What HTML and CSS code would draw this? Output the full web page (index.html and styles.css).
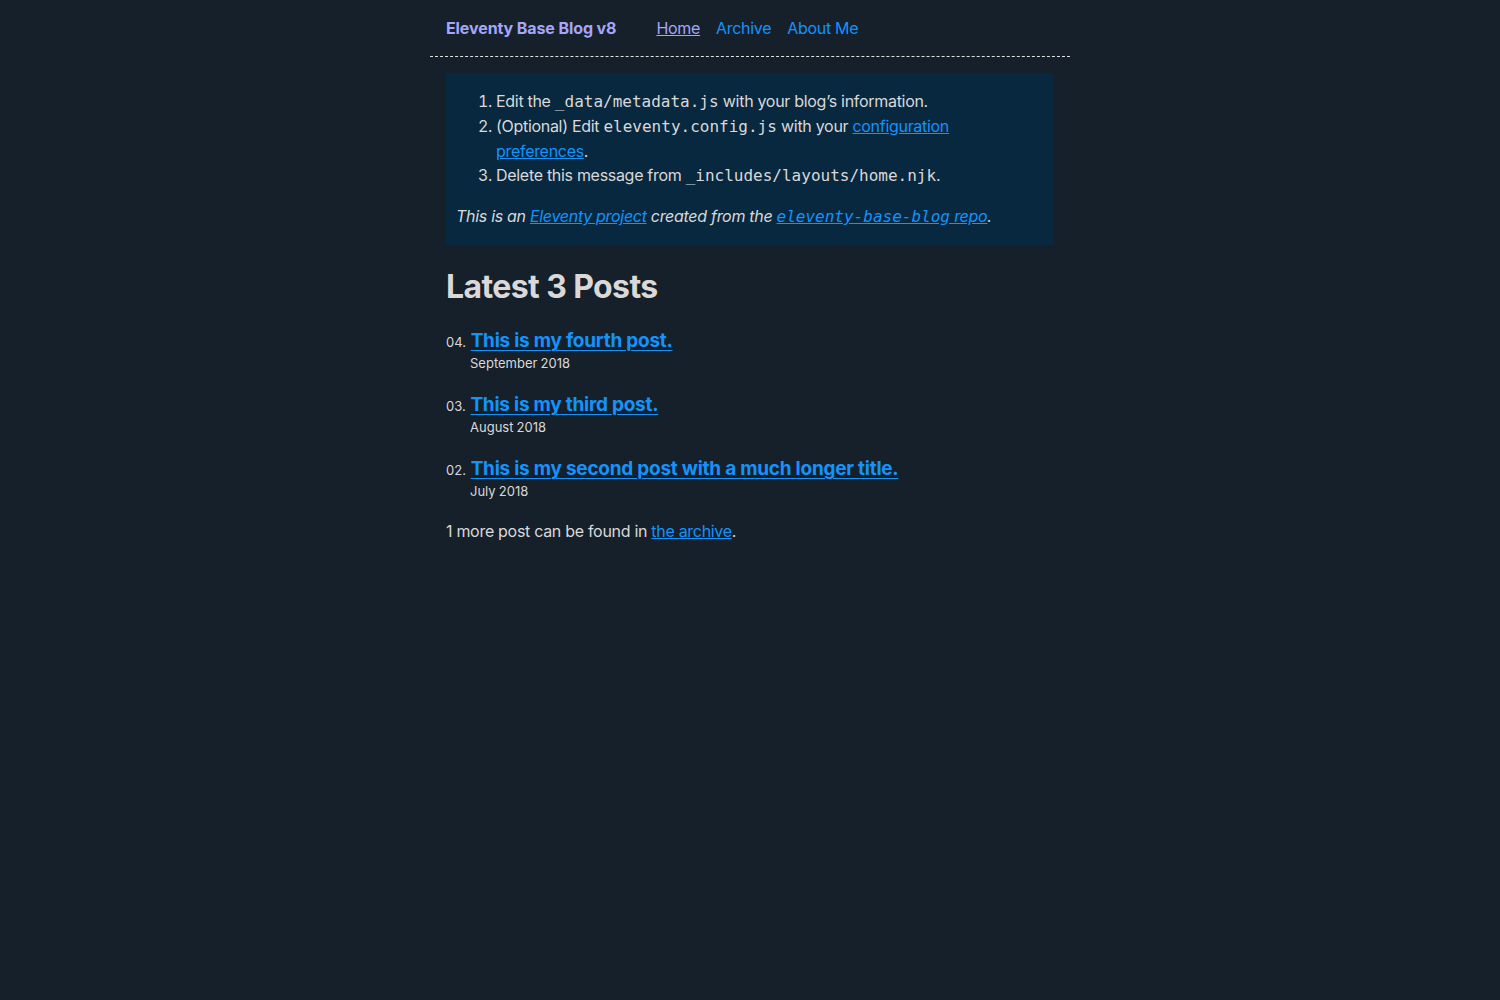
FILE: index.html
```html
<!doctype html>
<html lang="en">
<head>
<meta charset="utf-8">
<title>Eleventy Base Blog v8</title>
<link rel="stylesheet" href="styles.css">
</head>
<body>
<header class="site-header">
  <a class="home-link" href="#">Eleventy Base Blog v8</a>
  <nav>
    <ul class="nav">
      <li class="nav-item"><a class="visited" href="#" aria-current="page">Home</a></li>
      <li class="nav-item"><a href="#">Archive</a></li>
      <li class="nav-item"><a href="#">About Me</a></li>
    </ul>
  </nav>
</header>
<main>
  <div class="message-box">
    <ol>
      <li>Edit the <code>_data/metadata.js</code> with your blog’s information.</li>
      <li>(Optional) Edit <code>eleventy.config.js</code> with your <a href="#">configuration preferences</a>.</li>
      <li>Delete this message from <code>_includes/layouts/home.njk</code>.</li>
    </ol>
    <p><em>This is an <a href="#">Eleventy project</a> created from the <a href="#"><code>eleventy-base-blog</code> repo</a>.</em></p>
  </div>

  <h1>Latest 3 Posts</h1>

  <ol class="postlist">
    <li class="postlist-item" data-num="04">
      <a class="postlist-link" href="#">This is my fourth post.</a>
      <time class="postlist-date">September 2018</time>
    </li>
    <li class="postlist-item" data-num="03">
      <a class="postlist-link" href="#">This is my third post.</a>
      <time class="postlist-date">August 2018</time>
    </li>
    <li class="postlist-item" data-num="02">
      <a class="postlist-link" href="#">This is my second post with a much longer title.</a>
      <time class="postlist-date">July 2018</time>
    </li>
  </ol>

  <p>1 more post can be found in <a href="#">the archive</a>.</p>
</main>
</body>
</html>
```

FILE: styles.css
```css
:root {
  --color-gray-20: #e0e0e0;
  --color-gray-90: #dad8d8;
  --text-color-link: #1493fb;
  --text-color-link-visited: #a6a6f8;
  --background-color: #15202b;
}

html {
  margin: 0;
  padding: 0;
  background-color: var(--background-color);
}

body {
  margin: 0 auto;
  padding: 0;
  max-width: 40em;
  font-family: Inter, "Noto Sans", "Liberation Sans", sans-serif;
  font-size: 16px;
  letter-spacing: -0.3px;
  color: var(--color-gray-90);
  background-color: var(--background-color);
}

a {
  color: var(--text-color-link);
}

a.visited {
  color: var(--text-color-link-visited);
}

p,
li {
  line-height: 1.5;
}

code {
  font-family: "DejaVu Sans Mono", "Liberation Mono", monospace;
  font-size: 16px;
  line-height: 1.5;
  letter-spacing: 0;
}

/* Header */
.site-header {
  display: flex;
  align-items: center;
  gap: 40px;
  padding: 16px;
  height: 24px;
  border-bottom: 1px dashed var(--color-gray-20);
}

.home-link {
  font-weight: 700;
  letter-spacing: -0.1px;
  color: var(--text-color-link-visited);
  text-decoration: none;
}

.nav {
  display: flex;
  margin: 0;
  padding: 0;
  list-style: none;
}

.nav-item {
  margin-right: 16px;
}

.nav-item a {
  text-decoration: none;
}

.nav-item a[aria-current="page"] {
  text-decoration: underline;
}

/* Main */
main {
  padding: 16px;
}

.message-box {
  background-color: #082840;
  color: var(--color-gray-90);
  padding: 16px 10px;
}

.message-box ol {
  margin-top: 0;
  margin-bottom: 16px;
  padding-left: 40px;
}

.message-box p {
  margin: 0;
}

h1 {
  font-size: 32px;
  font-weight: 700;
  margin: 22px 0 21px;
  line-height: 39px;
  letter-spacing: -0.6px;
}

.postlist {
  list-style: none;
  padding: 0 0 0 24px;
  margin: 16px 0;
}

.postlist-item {
  display: flex;
  flex-wrap: wrap;
  align-items: baseline;
  margin-bottom: 16px;
  padding-bottom: 2px;
}

.postlist-item::before {
  content: attr(data-num) ".";
  display: inline-block;
  font-size: 13px;
  letter-spacing: 0;
  line-height: 100%;
  text-align: right;
  margin-left: -24px;
  color: var(--color-gray-90);
}

.postlist-link {
  font-size: 19px;
  font-weight: 700;
  letter-spacing: -0.25px;
  flex-basis: calc(100% - 24px);
  padding-left: 4.75px;
  padding-right: 9.5px;
  box-sizing: border-box;
  text-underline-position: from-font;
  text-decoration-thickness: 1px;
}

.postlist-date {
  font-size: 13px;
  letter-spacing: 0;
  word-spacing: -0.5px;
  margin-top: -2px;
  color: var(--color-gray-90);
}

main > p {
  margin: 15px 0 0;
}
```
